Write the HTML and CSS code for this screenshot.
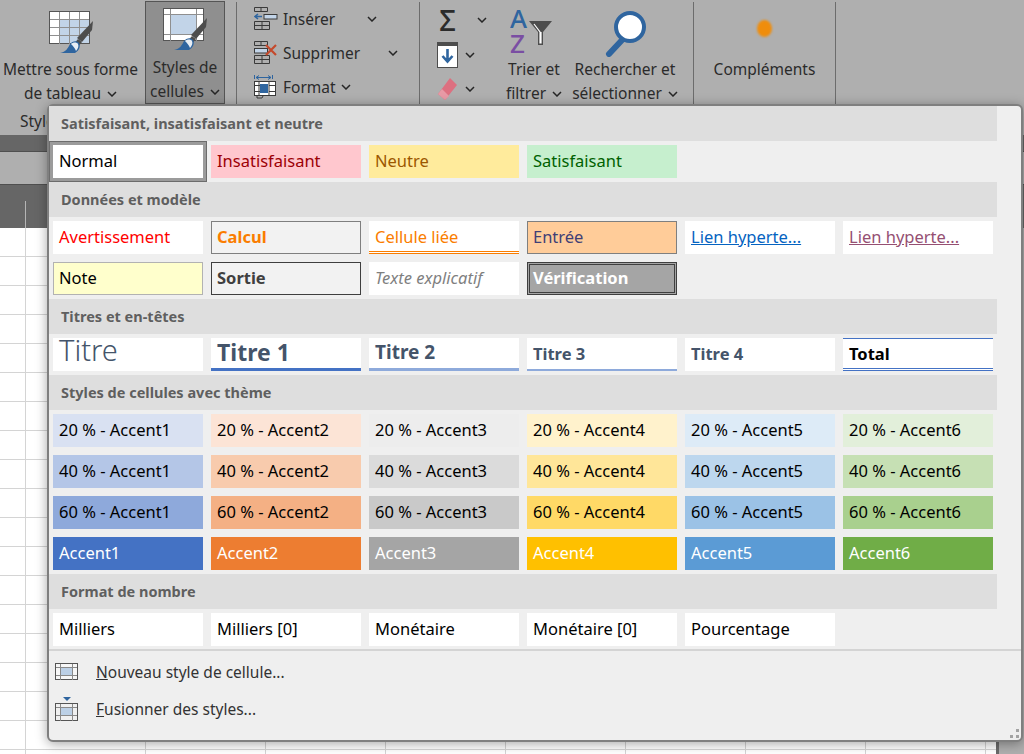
FILE: index.html
```html
<!DOCTYPE html>
<html lang="fr">
<head>
  <meta charset="utf-8">
  <title>Styles de cellules</title>
  <link rel="stylesheet" href="styles.css">
</head>
<body>
  <svg class="defs" width="0" height="0">
    <symbol id="chev" viewBox="0 0 10 6"><path d="M1 1l4 4 4-4" fill="none" stroke="#262626" stroke-width="1.5"/></symbol>
    <symbol id="brush" viewBox="0 0 44 44">
      <path d="M44 10l-1 9-10 12-5-4z" fill="#4d4d4d"/>
      <path d="M29 28l-5 6 4 3 5-6z" fill="#4d4d4d"/>
      <path d="M11 42c6-1 8-5 10-9 2-3 7-4 9-1 2 3 0 8-4 10z" fill="#2f659f"/>
      <path d="M22 33c2-2 6-2 7 0 1 2 0 5-2 7-1-3-3-5-5-7z" fill="#e9eef4"/>
    </symbol>
  </svg>

  <header class="ribbon">
    <div class="group group-styles">
      <div class="big-btn btn-table">
        <div class="icon-box">
          <svg class="icon-table" width="44" height="44" viewBox="0 0 44 44">
            <rect x=".5" y=".5" width="40" height="32" fill="#fff" stroke="#555"/>
            <rect x="10" y="8" width="30" height="24" fill="#c2d4e8"/>
            <path d="M10.5 1v32M20.5 1v32M30.5 1v32M1 8.500h39M1 16.500h39M1 24.500h39" stroke="#8f8f8f"/>
            <use href="#brush" width="44" height="44"/>
          </svg>
        </div>
        <span>Mettre sous forme</span>
        <span>de tableau <svg class="chev"><use href="#chev"/></svg></span>
      </div>
      <div class="big-btn btn-active">
        <div class="icon-box">
          <svg class="icon-cellstyle" width="44" height="44" viewBox="0 0 44 44">
            <rect x=".5" y=".5" width="40" height="32" fill="#fff" stroke="#555"/>
            <rect x="8" y="7" width="25" height="19" fill="#c2d4e8"/>
            <path d="M7.500 1v32M33.500 1v32M1 6.500h39M1 26.500h39" stroke="#8f8f8f"/>
            <use href="#brush" width="44" height="44"/>
          </svg>
        </div>
        <span>Styles de</span>
        <span>cellules <svg class="chev"><use href="#chev"/></svg></span>
      </div>
      <div class="group-name">Styles</div>
    </div>

    <div class="group group-cells">
      <div class="small-row row-insert">
        <svg width="24" height="24" viewBox="0 0 24 24">
          <path d="M.5 .5h13v4h-13zM7 1v3M.5 14.500h15v8h-15zM8 15v7M1 18.500h14" fill="none" stroke="#3a3a3a"/>
          <rect x="10" y="7.500" width="13" height="4.500" fill="#c2d4e8" stroke="#3a3a3a"/>
          <path d="M1 9.500h7M4 7l-3 2.500 3 2.500" fill="none" stroke="#2f659f" stroke-width="1.600"/>
        </svg>
        <span>Insérer</span>
        <svg class="chev"><use href="#chev"/></svg>
      </div>
      <div class="small-row row-delete">
        <svg width="24" height="24" viewBox="0 0 24 24">
          <path d="M.5 .5h13v4h-13zM7 1v3M.5 14.500h15v8h-15zM8 15v7M1 18.500h14" fill="none" stroke="#3a3a3a"/>
          <rect x=".5" y="7.500" width="13" height="4.500" fill="#c2d4e8" stroke="#3a3a3a"/>
          <path d="M12 4l10 10M22 4L12 14" stroke="#c4492c" stroke-width="2.200"/>
        </svg>
        <span>Supprimer</span>
        <svg class="chev"><use href="#chev"/></svg>
      </div>
      <div class="small-row row-format">
        <svg width="24" height="24" viewBox="0 0 24 24">
          <path d="M.500 0v4M18.500 0v4M2 2.500h15M5 .5l-3 2 3 2M14 .5l3 2-3 2" fill="none" stroke="#2f659f"/>
          <rect x=".5" y="6.500" width="21" height="14" fill="#fff" stroke="#3a3a3a"/>
          <rect x="6" y="9" width="8" height="9" fill="#2f659f"/>
          <path d="M5 7v13M15 7v13M1 10.500h5M15 10.500h6M1 16.500h5M15 16.500h6M3 21v2h5l1-2" fill="none" stroke="#3a3a3a"/>
        </svg>
        <span>Format</span>
        <svg class="chev"><use href="#chev"/></svg>
      </div>
    </div>

    <div class="group group-edit">
      <div class="tool-col">
        <div class="tool-row">
          <span class="sigma">Σ</span>
          <svg class="chev chev-sum"><use href="#chev"/></svg>
        </div>
        <div class="tool-row">
          <svg width="21" height="26" viewBox="0 0 21 26">
            <rect width="21" height="26" fill="#4d4d4d"/>
            <rect x="1" y="4" width="19" height="21" fill="#fff"/>
            <path d="M10.500 7v12M5.500 14l5 5.500 5-5.500" fill="none" stroke="#2f659f" stroke-width="2.600"/>
          </svg>
          <svg class="chev"><use href="#chev"/></svg>
        </div>
        <div class="tool-row">
          <svg width="21" height="24" viewBox="0 0 21 24">
            <path d="M13 1l7 7L8 23 1 17z" fill="#dd7080"/>
            <path d="M5 12l7 7-4 4-7-6z" fill="#e89aa6"/>
          </svg>
          <svg class="chev"><use href="#chev"/></svg>
        </div>
      </div>
      <div class="big-btn btn-sort">
        <div class="icon-box">
          <svg class="icon-sort" width="44" height="46" viewBox="0 0 44 46">
            <text class="az az-a" x="0" y="20">A</text>
            <text class="az az-z" x="0" y="45">Z</text>
            <path d="M19 13h23l-9 11v13h-5V24z" fill="#4d4d4d"/>
            <path d="M24 16l6 8v11h1V24" fill="none" stroke="#fff" stroke-width="1.200"/>
          </svg>
        </div>
        <span>Trier et</span>
        <span>filtrer <svg class="chev"><use href="#chev"/></svg></span>
      </div>
      <div class="big-btn btn-find">
        <div class="icon-box">
          <svg class="icon-find" width="42" height="47" viewBox="0 0 42 47">
            <path d="M4 44l14-15" stroke="#2f659f" stroke-width="6" stroke-linecap="round"/>
            <circle cx="25" cy="17" r="14" fill="#fff" stroke="#2f659f" stroke-width="4"/>
          </svg>
        </div>
        <span>Rechercher et</span>
        <span>sélectionner <svg class="chev"><use href="#chev"/></svg></span>
      </div>
    </div>

    <div class="group group-addins">
      <div class="big-btn btn-addins">
        <div class="icon-box"><div class="addin-dot"></div></div>
        <span>Compléments</span>
      </div>
    </div>
  </header>

  <div class="band-dark"></div>
  <div class="band-light"></div>
  <div class="band-head"><div class="head-tick"></div></div>
  <main class="sheet-wrap">
    <div class="sheet"></div>
    <div class="scroll-strip"></div>
  </main>

  <div class="popup">
    <section>
      <h3>Satisfaisant, insatisfaisant et neutre</h3>
      <div class="cells">
        <div class="cell normal selected">Normal</div>
        <div class="cell bad">Insatisfaisant</div>
        <div class="cell neutral">Neutre</div>
        <div class="cell good">Satisfaisant</div>
      </div>
    </section>
    <section>
      <h3>Données et modèle</h3>
      <div class="cells">
        <div class="cell warning">Avertissement</div>
        <div class="cell calc">Calcul</div>
        <div class="cell linked">Cellule liée</div>
        <div class="cell entry">Entrée</div>
        <div class="cell link"><u>Lien hyperte...</u></div>
        <div class="cell visited"><u>Lien hyperte...</u></div>
        <div class="cell note">Note</div>
        <div class="cell output">Sortie</div>
        <div class="cell explain">Texte explicatif</div>
        <div class="cell check">Vérification</div>
      </div>
    </section>
    <section>
      <h3>Titres et en-têtes</h3>
      <div class="cells">
        <div class="cell title">Titre</div>
        <div class="cell t1">Titre 1</div>
        <div class="cell t2">Titre 2</div>
        <div class="cell t3">Titre 3</div>
        <div class="cell t4">Titre 4</div>
        <div class="cell total">Total</div>
      </div>
    </section>
    <section>
      <h3>Styles de cellules avec thème</h3>
      <div class="cells">
        <div class="cell a1-20">20 % - Accent1</div>
        <div class="cell a2-20">20 % - Accent2</div>
        <div class="cell a3-20">20 % - Accent3</div>
        <div class="cell a4-20">20 % - Accent4</div>
        <div class="cell a5-20">20 % - Accent5</div>
        <div class="cell a6-20">20 % - Accent6</div>
        <div class="cell a1-40">40 % - Accent1</div>
        <div class="cell a2-40">40 % - Accent2</div>
        <div class="cell a3-40">40 % - Accent3</div>
        <div class="cell a4-40">40 % - Accent4</div>
        <div class="cell a5-40">40 % - Accent5</div>
        <div class="cell a6-40">40 % - Accent6</div>
        <div class="cell a1-60">60 % - Accent1</div>
        <div class="cell a2-60">60 % - Accent2</div>
        <div class="cell a3-60">60 % - Accent3</div>
        <div class="cell a4-60">60 % - Accent4</div>
        <div class="cell a5-60">60 % - Accent5</div>
        <div class="cell a6-60">60 % - Accent6</div>
        <div class="cell a1">Accent1</div>
        <div class="cell a2">Accent2</div>
        <div class="cell a3">Accent3</div>
        <div class="cell a4">Accent4</div>
        <div class="cell a5">Accent5</div>
        <div class="cell a6">Accent6</div>
      </div>
    </section>
    <section>
      <h3>Format de nombre</h3>
      <div class="cells">
        <div class="cell">Milliers</div>
        <div class="cell">Milliers [0]</div>
        <div class="cell">Monétaire</div>
        <div class="cell">Monétaire [0]</div>
        <div class="cell">Pourcentage</div>
      </div>
    </section>

    <div class="menu">
      <div class="menu-item">
        <svg width="24" height="18" viewBox="0 0 24 18">
          <rect x=".5" y=".5" width="22" height="16" fill="#f7f7f7" stroke="#555"/>
          <rect x="5" y="5" width="13" height="7" fill="#bcd0e6"/>
          <path d="M5.500 1v16M17.500 1v16M1 4.500h21M1 12.500h21" stroke="#8a8a8a"/>
        </svg>
        <span><u>N</u>ouveau style de cellule...</span>
      </div>
      <div class="menu-item">
        <svg width="24" height="24" viewBox="0 0 24 24">
          <path d="M8 0h8l-4 4z" fill="#2f659f"/>
          <rect x=".5" y="6.500" width="22" height="17" fill="#f0f0f0" stroke="#555"/>
          <rect x="5" y="11" width="13" height="8" fill="#bcd0e6"/>
          <path d="M5.500 7v17M17.500 7v17M1 10.500h21M1 18.500h21" stroke="#8a8a8a"/>
        </svg>
        <span><u>F</u>usionner des styles...</span>
      </div>
    </div>

    <svg class="grip" width="9" height="9" viewBox="0 0 9 9">
      <path d="M6 0h3v3H6zM0 6h3v3H0zM6 6h3v3H6z" fill="#a3a3a3"/>
    </svg>
  </div>
</body>
</html>
```

FILE: styles.css
```css
* {
  box-sizing: border-box;
}

html, body {
  margin: 0;
  height: 754px;
  overflow: hidden;
}

body {
  position: relative;
  font-family: "Noto Sans", "Open Sans", sans-serif;
  background: #afafaf;
  color: #2b2b2b;
}

.defs {
  position: absolute;
}

/* ribbon */
.ribbon {
  display: flex;
  height: 135px;
  background: #afafaf;
  font-size: 15.5px;
}

.group {
  display: flex;
  height: 104px;
  margin-top: 2px;
  border-right: 1px solid #6c6c6c;
  flex: none;
}

.group-styles {
  position: relative;
  width: 237px;
}

.group-name {
  position: absolute;
  left: 20px;
  top: 108px;
}

.group-cells {
  flex-direction: column;
  width: 183px;
  padding: 0 0 0 17px;
}

.group-edit {
  width: 274px;
  padding-left: 17px;
}

.group-addins {
  width: 142px;
}

.big-btn {
  display: flex;
  flex-direction: column;
  align-items: center;
  flex: none;
  line-height: 24px;
  white-space: nowrap;
}

.big-btn span {
  height: 24px;
}

.icon-box {
  display: flex;
  justify-content: center;
  height: 55px;
  width: 100%;
}

.btn-table {
  width: 141px;
}

.btn-table .icon-table {
  margin-top: 9px;
}

.btn-active {
  width: 80px;
  height: 103px;
  margin: -1px 0 0 4px;
  border: 1px solid #555;
  background: #8f8f8f;
}

.btn-active .icon-cellstyle {
  margin-top: 6px;
}

.btn-sort {
  width: 74px;
}

.btn-find {
  width: 108px;
}

.btn-addins {
  width: 100%;
}

.icon-sort {
  margin: 6px 0 0 -5px;
}

.az {
  font-size: 26px;
  font-weight: 500;
}

.az-a {
  fill: #2f659f;
}

.az-z {
  fill: #7a4ea3;
}

.icon-find {
  margin: 8px 0 0 2px;
}

.addin-dot {
  width: 15px;
  height: 17px;
  margin-top: 18px;
  border-radius: 50%;
  background: #ef8d0c;
  filter: blur(1px);
}

.chev {
  width: 10px;
  height: 6px;
  margin-left: 2px;
  vertical-align: 2px;
}

.small-row {
  display: flex;
  align-items: center;
  height: 34px;
  gap: 5px;
}

.row-insert .chev {
  margin-left: 27px;
}

.row-delete .chev {
  margin-left: 23px;
}

.row-format .chev {
  margin-left: 0;
}

.tool-col {
  display: flex;
  flex-direction: column;
  width: 60px;
  flex: none;
}

.tool-row {
  display: flex;
  align-items: center;
  height: 41px;
  gap: 7px;
}

.tool-row:first-child {
  height: 36px;
}

.tool-row .chev {
  margin: 0;
}

.sigma {
  width: 21px;
  font-size: 29px;
  line-height: 36px;
  text-align: center;
  font-weight: 500;
}

.chev-sum {
  margin-left: 12px !important;
}

/* worksheet behind the popup */
.band-dark {
  height: 17px;
  background: #666;
  border-bottom: 1px solid #4f4f4f;
}

.band-light {
  height: 32px;
  background: #afafaf;
}

.band-head {
  height: 44px;
  background: #666;
  border-top: 1px solid #4f4f4f;
  padding: 16px 0 0 25px;
}

.head-tick {
  width: 1px;
  height: 28px;
  background: #b5b5b5;
}

.sheet-wrap {
  display: flex;
  height: 526px;
}

.sheet {
  width: 999px;
  border-right: 3px solid #6a6a6a;
  background-color: #fff;
  background-image:
    linear-gradient(to bottom, #d4d4d4 1px, transparent 1px),
    linear-gradient(to right, #d4d4d4 1px, transparent 1px);
  background-size: 120px 29px;
  background-position: 25px 28px;
}

.scroll-strip {
  flex: 1;
  background: #afafaf;
}

/* cell styles popup */
.popup {
  position: absolute;
  left: 47px;
  top: 104px;
  width: 976px;
  height: 638px;
  border: 2px solid #7f7f7f;
  border-radius: 6px;
  background: #efefef;
  box-shadow: 0 2px 12px rgba(0, 0, 0, 0.35);
}

.popup section {
  width: 948px;
}

.popup h3 {
  margin: 0;
  height: 35px;
  padding-left: 12px;
  background: #dedede;
  color: #5f5f5f;
  font-size: 14.500px;
  font-weight: 700;
  line-height: 35px;
}

.cells {
  display: grid;
  grid-template-columns: repeat(6, 150px);
  grid-auto-rows: 33px;
  gap: 8px;
  padding: 4px 4px;
}

.cell {
  padding-left: 6px;
  background: #fff;
  color: #000;
  font-size: 16.500px;
  line-height: 31px;
  white-space: nowrap;
  overflow: hidden;
}

.selected {
  box-shadow: 0 0 0 3px #9b9b9b, 0 0 0 4px #6c6c6c;
}

.bad {
  background: #ffc7ce;
  color: #9c0006;
}

.neutral {
  background: #ffeb9c;
  color: #9c5700;
}

.good {
  background: #c6efce;
  color: #006100;
}

.warning {
  color: #f00;
}

.calc {
  border: 1px solid #7f7f7f;
  background: #f2f2f2;
  color: #fa7d00;
  font-weight: 700;
  padding-left: 5px;
  line-height: 29px;
}

.linked {
  border-bottom: 3px double #fa7d00;
  color: #fa7d00;
}

.entry {
  border: 1px solid #7f7f7f;
  background: #fc9;
  color: #3f3f76;
  padding-left: 5px;
  line-height: 29px;
}

.link {
  color: #0563c1;
}

.visited {
  color: #954f72;
}

.note {
  border: 1px solid #b2b2b2;
  background: #ffc;
  padding-left: 5px;
  line-height: 29px;
}

.output {
  border: 1px solid #3f3f3f;
  background: #f2f2f2;
  color: #3f3f3f;
  font-weight: 700;
  padding-left: 5px;
  line-height: 29px;
}

.explain {
  color: #7f7f7f;
  font-style: italic;
}

.check {
  border: 3px double #3f3f3f;
  background: #a5a5a5;
  color: #fff;
  font-weight: 700;
  padding-left: 3px;
  line-height: 25px;
}

.title {
  color: #44546a;
  font-size: 29px;
  font-weight: 300;
  line-height: 24px;
}

.t1, .t2, .t3, .t4 {
  color: #44546a;
  font-weight: 700;
}

.t1 {
  border-bottom: 3px solid #4472c4;
  font-size: 23px;
  line-height: 28px;
}

.t2 {
  border-bottom: 3px solid #8eaadb;
  font-size: 19px;
  line-height: 29px;
}

.t3 {
  border-bottom: 2px solid #8eaadb;
  font-size: 16.500px;
}

.t4 {
  font-size: 16.500px;
}

.total {
  border-top: 1px solid #4472c4;
  border-bottom: 3px double #4472c4;
  font-weight: 700;
  line-height: 29px;
}

.a1-20 { background: #d9e1f2; }
.a2-20 { background: #fce4d6; }
.a3-20 { background: #ededed; }
.a4-20 { background: #fff2cc; }
.a5-20 { background: #ddebf7; }
.a6-20 { background: #e2efda; }
.a1-40 { background: #b4c6e7; }
.a2-40 { background: #f8cbad; }
.a3-40 { background: #dbdbdb; }
.a4-40 { background: #ffe699; }
.a5-40 { background: #bdd7ee; }
.a6-40 { background: #c6e0b4; }
.a1-60 { background: #8ea9db; }
.a2-60 { background: #f4b084; }
.a3-60 { background: #c9c9c9; }
.a4-60 { background: #ffd966; }
.a5-60 { background: #9bc2e6; }
.a6-60 { background: #a9d08e; }
.a1, .a2, .a3, .a4, .a5, .a6 { color: #fff; }
.a1 { background: #4472c4; }
.a2 { background: #ed7d31; }
.a3 { background: #a5a5a5; }
.a4 { background: #ffc000; }
.a5 { background: #5b9bd5; }
.a6 { background: #70ad47; }

.menu {
  border-top: 2px solid #d4d4d4;
  margin-top: -1px;
  padding-top: 2px;
}

.menu-item {
  display: flex;
  align-items: center;
  height: 37px;
  padding-left: 6px;
  font-size: 15.500px;
  color: #333;
}

.menu-item svg {
  flex: none;
  margin-right: 17px;
  width: 24px;
}

.grip {
  position: absolute;
  right: 2px;
  bottom: 2px;
}
```
